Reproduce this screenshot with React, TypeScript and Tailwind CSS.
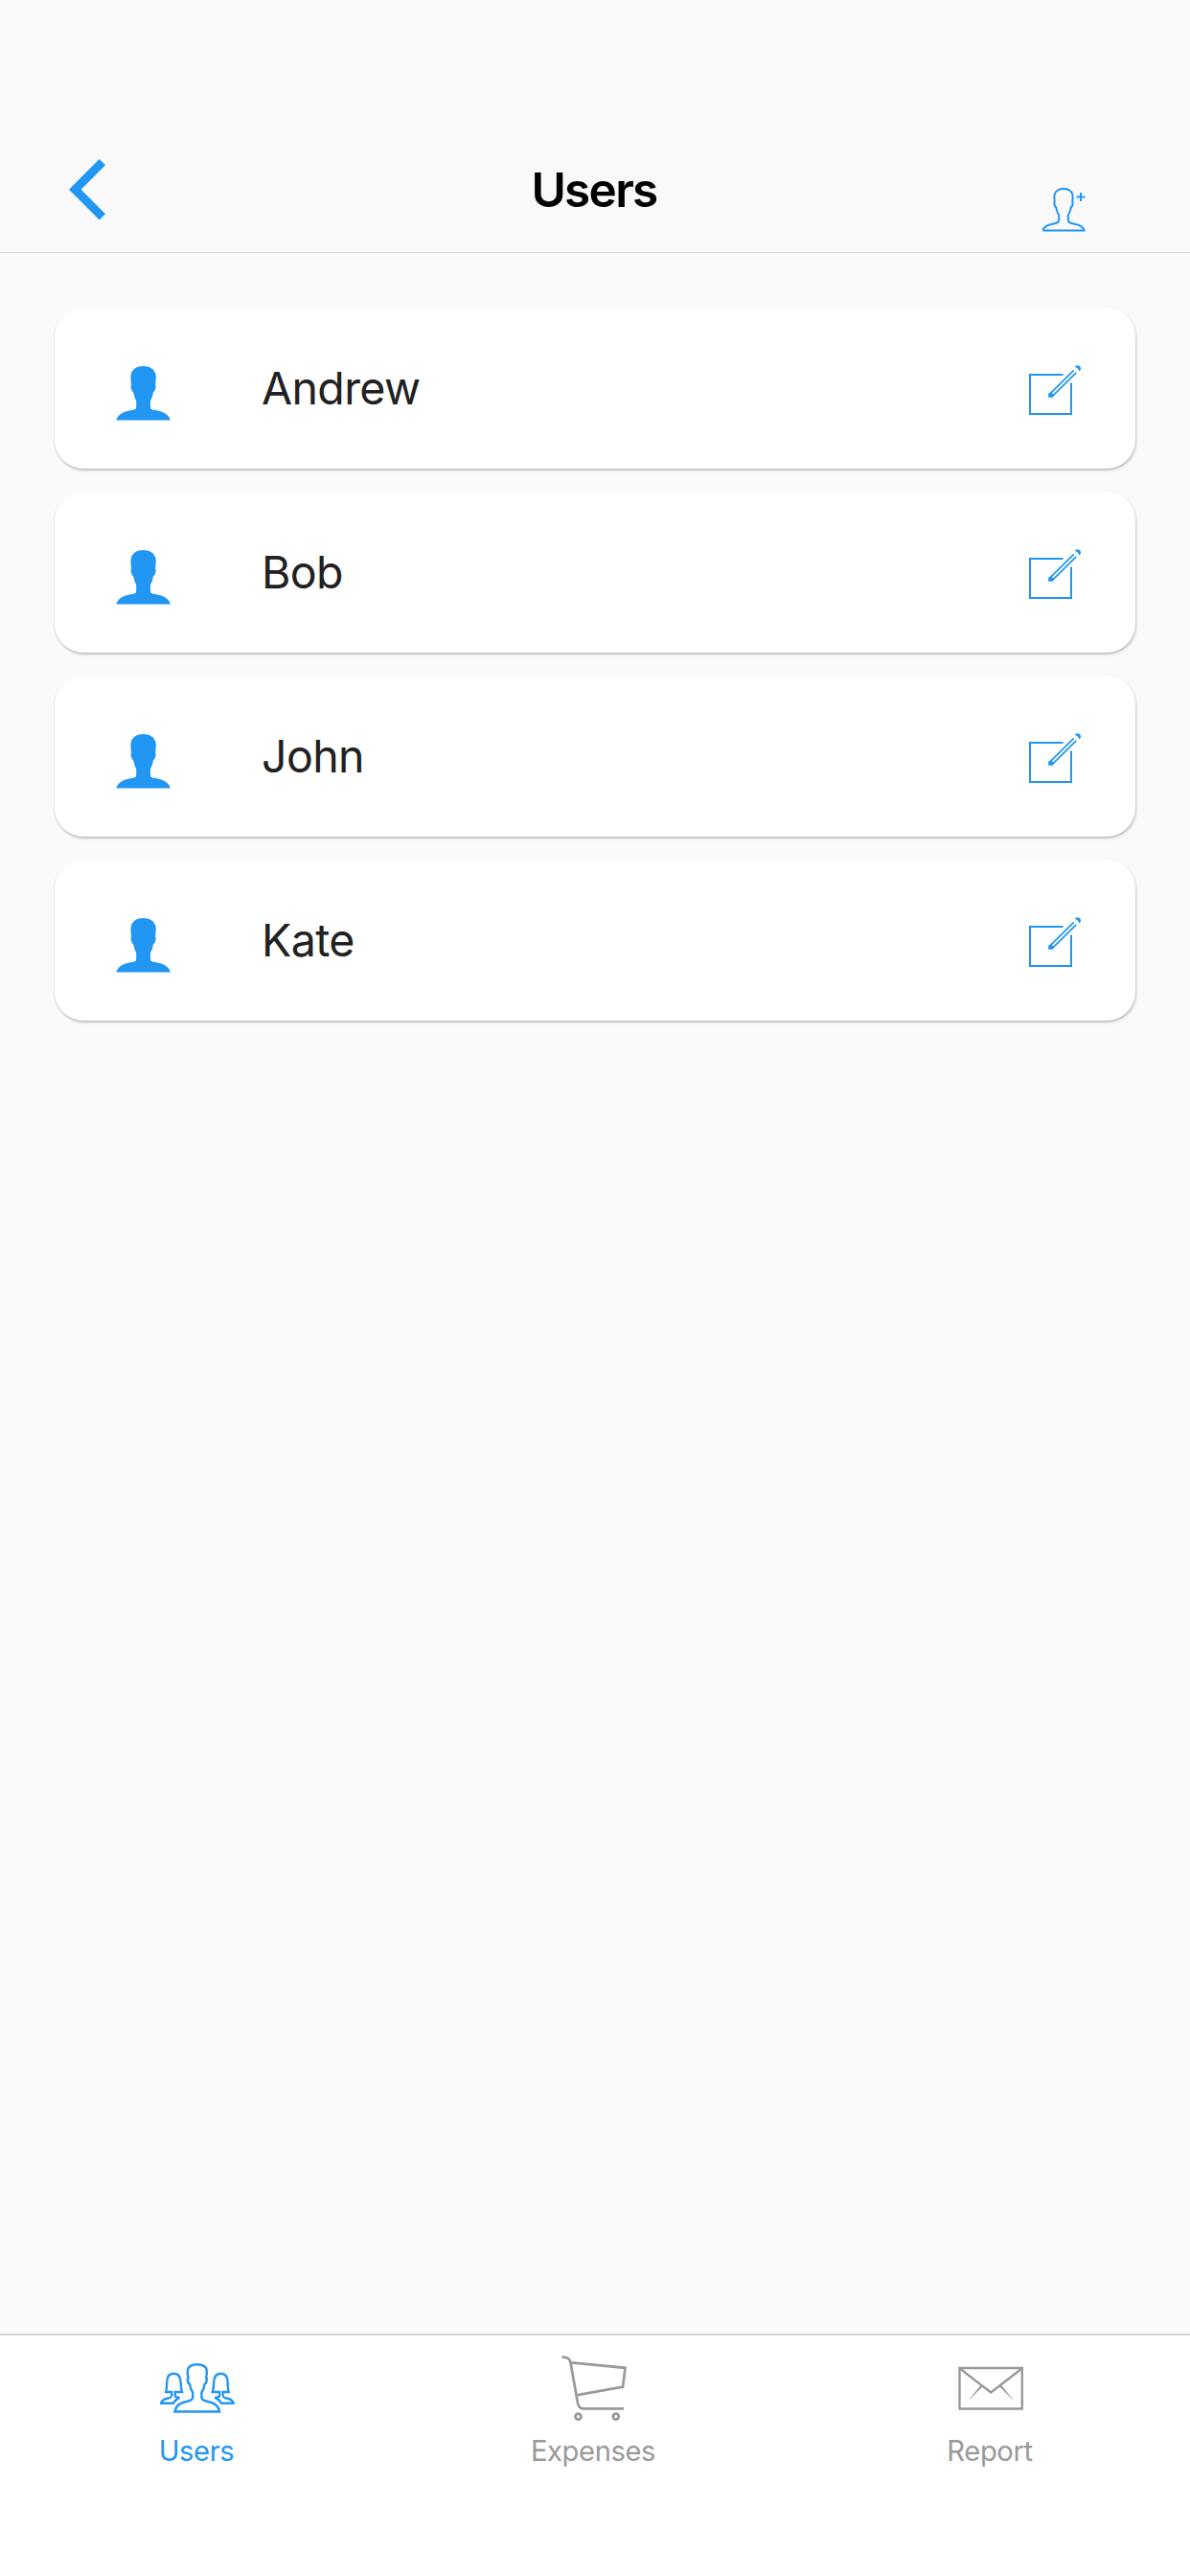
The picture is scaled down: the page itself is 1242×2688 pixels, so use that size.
const users = ['Andrew', 'Bob', 'John', 'Kate'];

function BackIcon() {
  return (
    <svg className="h-20 w-[60px] fill-[#2196f3]" viewBox="60 158 60 80">
      <path d="M103.700 166 72 197.700l31.700 31.800 6.300-6.300-25.400-25.500 25.400-25.400z" />
    </svg>
  );
}

function AddUserIcon() {
  return (
    <svg className="h-[60px] w-[60px] fill-none stroke-[#2196f3] stroke-2" viewBox="1080 190 60 60">
      <path d="M1088.500 240.500h43c-.5-3.600-5.500-6-11-7.100-4.200-.9-5.700-1.500-5.700-3.700v-5.200c1.700-2.500 2.500-5 3-8.200.8-.5 1.900-2.800 1.800-4.800l-.3-1.200c.5-3.500.6-6.800-.7-9.200-1.500-2.800-4.800-4.200-8.600-4.200s-7.100 1.400-8.600 4.200c-1.300 2.400-1.200 5.700-.7 9.200l-.3 1.200c-.1 2 1 4.300 1.800 4.800.5 3.200 1.300 5.700 3 8.200v5.200c0 2.200-1.500 2.800-5.700 3.700-5.500 1.100-10.500 3.500-11 7.100z" />
      <path d="M1128 201v9M1123.500 205.500h9" />
    </svg>
  );
}

function UserIcon() {
  return (
    <svg className="h-[60px] w-[60px] fill-[#2196f3]" viewBox="120 380 60 60">
      <path d="M121.500 438.600h56.300c-.3-5.200-7.800-9.300-14.800-10.300-4-.6-6-1.300-6-3v-7.300c1.500-2.300 2.400-4.800 2.700-8 1.800-1.800 3-4.500 3-7.500 0-.6-.2-.9-.7-1.100.6-2.700.9-6 .7-9.400-.5-6-5.500-10-13.100-10s-12.600 4-13.100 10c-.2 3.400.1 6.700.7 9.400-.5.200-.7.500-.7 1.100 0 3 1.200 5.700 3 7.500.3 3.200 1.200 5.700 2.700 8v7.300c0 1.700-2 2.400-6 3-7 1-14.400 5.100-14.700 10.300z" />
    </svg>
  );
}

function EditIcon() {
  return (
    <svg className="h-[60px] w-[60px] fill-none stroke-[#2196f3] stroke-2" viewBox="1070 378 60 60">
      <path d="M1109.500 391H1075v41h43v-32.500" />
      <path d="m1120.700 386.400-24.500 24.300M1123.200 388.900l-24.500 24.300" strokeWidth="1.700" />
      <path d="M1094.300 410.300 1097.500 409.700 1100 412.200 1098.700 414.800h-4.600z" className="fill-[#2196f3] stroke-none" />
      <path d="m1121.600 383.100c1.700-2.400 4-2.500 5.500-.9s1.300 3.800-.8 5.400c-.4-2.400-2.200-4.200-4.700-4.500z" className="fill-[#2196f3] stroke-none" />
    </svg>
  );
}

function UsersIcon() {
  return (
    <svg className="h-[70px] w-[90px] fill-none stroke-current stroke-[2.4]" viewBox="161 2456 90 70">
      <path d="M182.400 2516.500h46.800c-.8-5.500-5-9-11.300-10.300-5.500-1-7.500-2-7.500-4.700v-5c2-3 2.900-5.500 3.100-8.500 1.700-1 2.400-3 2.300-6-.1-.8-.4-1-.7-1.100.8-2.800 1-5.600.5-8.200-.9-3.700-4.700-5.500-9.800-5.500s-8.900 1.800-9.800 5.500c-.5 2.600-.3 5.400.5 8.200-.3.100-.6.300-.7 1.100-.1 3 .6 5 2.300 6 .2 3 1.100 5.500 3.100 8.500v5c0 2.700-2 3.700-7.500 4.700-6.300 1.300-10.500 4.800-11.300 10.300z" />
      <path d="M180.800 2507.700h-12.600c.3-2.700 3-4.300 7-5.200 3-.7 4-1.200 4-3.500v-3h-6c.7-3 1-6 1-10 0-6 2-9.200 7.200-9.200s7 3.200 7.200 9.200c.1 4 .4 7 1.400 10h-7.300v3.500c0 1.600 1.500 2.300 4.800 2.300-3 1-4.500 2.500-6.700 5.900z" />
      <path d="M231 2507.700h12.600c-.3-2.700-3-4.300-7-5.200-3-.7-4-1.200-4-3.500v-3h6c-.7-3-1-6-1-10 0-6-2-9.200-7.200-9.200s-7 3.200-7.200 9.200c-.1 4-.4 7-1.400 10h7.300v3.500c0 1.600-1.500 2.300-4.800 2.300 3 1 4.500 2.500 6.700 5.900z" />
    </svg>
  );
}

function CartIcon() {
  return (
    <svg className="h-[76px] w-[80px] fill-none stroke-current stroke-[2.7]" viewBox="580 2453 80 76">
      <path d="M586.500 2459.700c6 0 8 1.300 9 5.500l7.400 42c1.100 4.500 2.500 6.100 5.500 6.100H651" />
      <path d="m596.500 2465.300 56 5.500-2.400 19.900-47.300 8.500" />
      <circle cx="603.500" cy="2521.600" r="3" />
      <circle cx="642.800" cy="2521.600" r="3" />
    </svg>
  );
}

function MailIcon() {
  return (
    <svg className="h-[60px] w-[80px] fill-none stroke-current stroke-[2.4]" viewBox="994 2461 80 60">
      <path d="M1001.500 2471h65.300v42.500h-65.300z" />
      <path d="m1002.500 2472 31.700 24.500 31.700-24.500" />
      <path d="m1024 2488.600 1.800 1.400-14 13.600zM1044.600 2488.600l-1.800 1.400 14 13.600z" className="fill-current" strokeWidth="0.4" />
    </svg>
  );
}

const tabs = [
  { label: 'Users', icon: <UsersIcon />, color: 'text-[#2196f3]' },
  { label: 'Expenses', icon: <CartIcon />, color: 'text-[#999999]' },
  { label: 'Report', icon: <MailIcon />, color: 'text-[#999999]' },
];

export default function App() {
  return (
    <div className="flex h-[2688px] w-[1242px] flex-col bg-[#fafafa] font-[Inter,sans-serif]">
      <header className="grid h-[264px] shrink-0 grid-cols-3 items-center border-b border-[#d3d3d3] bg-[#f9f9f9] pt-[132px]">
        <button className="w-fit pl-[60px]" aria-label="Back"><BackIcon /></button>
        <h1 className="pr-0.5 text-center text-[49.5px] leading-[60px] font-semibold tracking-[-1.7px] text-black">Users</h1>
        <button className="mt-11 mr-[102px] w-fit justify-self-end" aria-label="Add user"><AddUserIcon /></button>
      </header>
      <main className="flex grow flex-col gap-6 px-[57px] pt-[57px]">
        {users.map((name) => (
          <section key={name} className="flex h-[168px] items-center rounded-[30px] bg-white pr-[55px] pl-[63px] shadow-[1px_2px_3px_rgba(0,0,0,0.17),0_1px_2px_rgba(0,0,0,0.15)]">
            <div className="pt-2.5"><UserIcon /></div>
            <span className="grow pl-[93px] text-[46.5px] leading-[60px] tracking-[-0.6px] text-[#212121]">{name}</span>
            <button className="pt-1.5" aria-label={`Edit ${name}`}><EditIcon /></button>
          </section>
        ))}
      </main>
      <nav className="grid h-[253px] shrink-0 grid-cols-[412px_416px_412px] border-t-2 border-[#d4d4d4] bg-white">
        {tabs.map((tab) => (
          <button key={tab.label} className={`flex flex-col items-center ${tab.color}`}>
            <span className="flex h-[108px] w-full items-center justify-center">{tab.icon}</span>
            <span className="-mt-[5px] pr-0.5 text-[29.2px] leading-9 tracking-[-0.4px]">{tab.label}</span>
          </button>
        ))}
      </nav>
    </div>
  );
}
